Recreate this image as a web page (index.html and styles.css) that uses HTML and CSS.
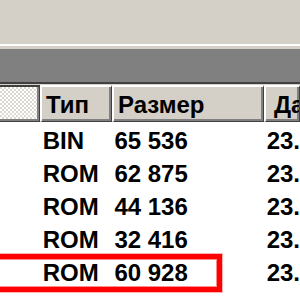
FILE: index.html
```html
<!DOCTYPE html>
<html lang="ru">
<head>
  <meta charset="UTF-8">
  <title>Файлы</title>
  <link rel="stylesheet" href="styles.css">
</head>
<body>
  <div class="toolbar"></div>
  <div class="band"></div>

  <div class="header">
    <div class="hcell hcell-name"></div>
    <div class="hcell hcell-type">Тип</div>
    <div class="hcell hcell-size">Размер</div>
    <div class="hcell hcell-date">Да</div>
  </div>

  <div class="rows">
    <div class="row"><span class="c-name"></span><span class="c-type">BIN</span><span class="c-size">65 536</span><span class="c-date">23.</span></div>
    <div class="row"><span class="c-name"></span><span class="c-type">ROM</span><span class="c-size">62 875</span><span class="c-date">23.</span></div>
    <div class="row"><span class="c-name"></span><span class="c-type">ROM</span><span class="c-size">44 136</span><span class="c-date">23.</span></div>
    <div class="row"><span class="c-name"></span><span class="c-type">ROM</span><span class="c-size">32 416</span><span class="c-date">23.</span></div>
    <div class="row"><span class="c-name"></span><span class="c-type">ROM</span><span class="c-size">60 928</span><span class="c-date">23.</span></div>
    <div class="mark"></div>
  </div>
</body>
</html>
```

FILE: styles.css
```css
body {
  margin: 0;
  width: 300px;
  height: 300px;
  overflow: hidden;
  background: #fff;
  font-family: "Liberation Sans", Arial, sans-serif;
  font-weight: bold;
  font-size: 24px;
  color: #000;
}

.toolbar {
  height: 44px;
  background: #d4d0c8;
  border-bottom: 2px solid #fff;
}

.band {
  height: 33px;
  background: #808080;
  border-top: 3px solid #d4d0c8;
  border-bottom: 2px solid #404040;
}

.header {
  display: flex;
  height: 37px;
  background: #d4d0c8;
  border-top: 1px solid #d4d0c8;
}

.hcell {
  box-sizing: border-box;
  height: 37px;
  line-height: 36px;
  flex: none;
  white-space: nowrap;
  overflow: hidden;
  border-top: 2px solid #fff;
  border-left: 2px solid #fff;
  border-right: 1px solid #404040;
  border-bottom: 1px solid #404040;
  box-shadow: inset -2px -2px 0 #808080;
}

.hcell-name {
  width: 40px;
  border-top: 2px solid #404040;
  border-left: none;
  background: repeating-conic-gradient(#fff 0 25%, #dcd9d2 0 50%) 0 0 / 4px 4px;
}

.hcell-type {
  width: 72px;
  padding-left: 4px;
}

.hcell-size {
  width: 152px;
  padding-left: 4px;
}

.hcell-date {
  flex: 1;
  padding-left: 8px;
}

.rows {
  position: relative;
  padding-top: 2px;
}

.row {
  display: flex;
  height: 33px;
  line-height: 33px;
  white-space: nowrap;
}

.c-name {
  width: 43px;
}

.c-type {
  width: 72px;
}

.c-size {
  width: 153px;
}

.mark {
  position: absolute;
  left: -20px;
  top: 132px;
  width: 232px;
  height: 28px;
  border: 5px solid #f00;
  box-shadow: inset 0 0 0 1px #ff8c8c, 0 0 0 1px #ffb4b4;
}
```
